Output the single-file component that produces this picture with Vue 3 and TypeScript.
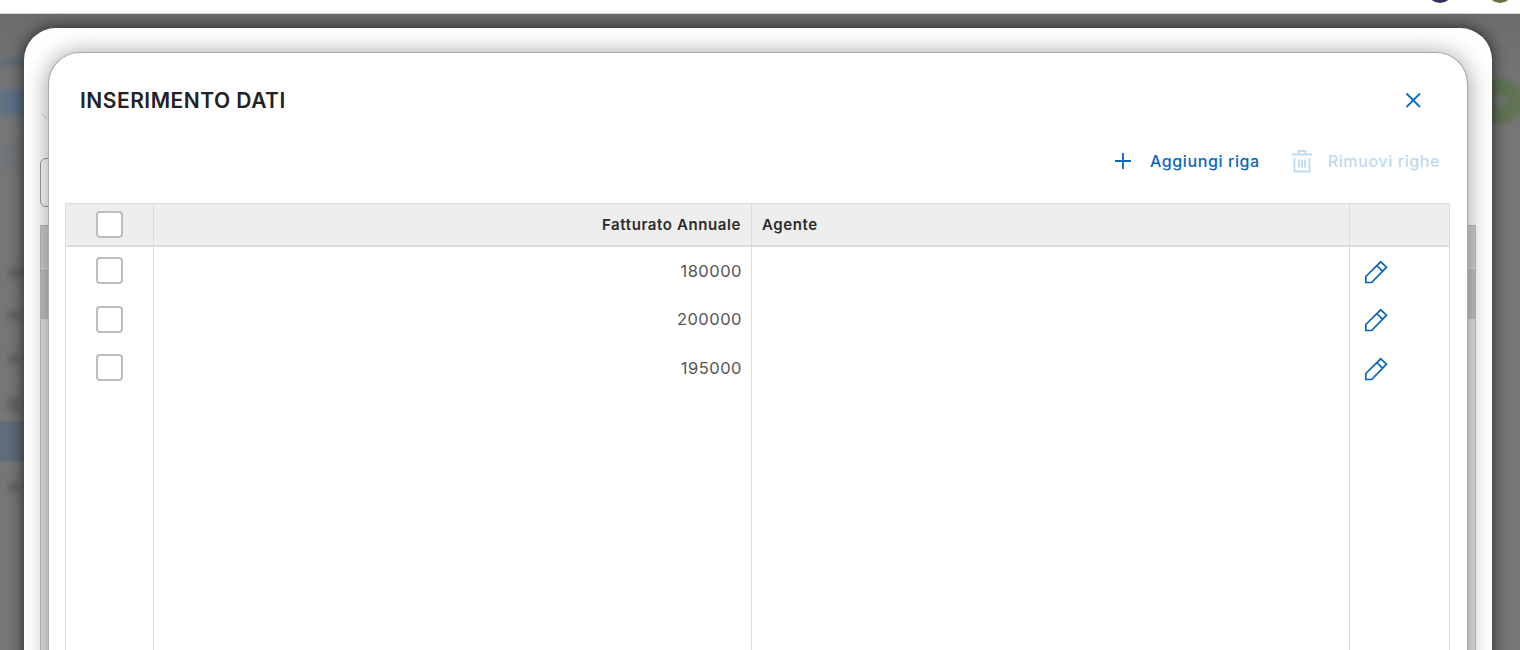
<script setup lang="ts">
interface Row {
  id: number
  fatturato: string
  agente: string
}

const rows: Row[] = [
  { id: 1, fatturato: '180000', agente: '' },
  { id: 2, fatturato: '200000', agente: '' },
  { id: 3, fatturato: '195000', agente: '' },
]
</script>

<template>
  <div class="page">
    <div class="topbar">
      <span class="avatar purple"></span>
      <span class="avatar olive"></span>
    </div>
    <div class="backdrop">
      <span class="blob stripe"></span>
      <span class="blob blue-box"></span>
      <span class="blob search"></span>
      <span class="blob row-a"></span>
      <span class="blob row-b"></span>
      <span class="blob row-c"></span>
      <span class="blob row-d"></span>
      <span class="blob selected"></span>
      <span class="blob row-e"></span>
      <span class="ring"></span>

      <div class="outer">
        <div class="behind">
          <svg class="chevron" width="10" height="10" viewBox="0 0 10 10">
            <path d="M0 2l5 5" fill="none" stroke="#b4cbe6" stroke-width="1" />
          </svg>
          <span class="filter-box"></span>
          <div class="behind-table">
            <span class="behind-head"></span>
            <span class="behind-strip"></span>
          </div>
        </div>

        <div class="dialog">
          <header class="head">
            <h1>INSERIMENTO DATI</h1>
            <button class="close" type="button" aria-label="Chiudi">
              <svg width="18" height="18" viewBox="0 0 18 18">
                <path d="M2.500 2.500l13.500 13.500M16 2.500L2.500 16" fill="none" stroke="currentColor" stroke-width="1.800" />
              </svg>
            </button>
          </header>

          <div class="toolbar">
            <button class="action" type="button">
              <svg width="18" height="18" viewBox="0 0 18 18">
                <path d="M9 1v16M1 9h16" fill="none" stroke="currentColor" stroke-width="1.800" />
              </svg>
              <span>Aggiungi riga</span>
            </button>
            <button class="action disabled" type="button">
              <svg width="22" height="24" viewBox="0 0 22 24" fill="none" stroke="currentColor" stroke-width="1.800">
                <path d="M1 5.500h20M7.500 5.500V2h7v3.500M3.500 9v13.500h15V9M8 10.500v8M11 10.500v8M14 10.500v8" />
              </svg>
              <span>Rimuovi righe</span>
            </button>
          </div>

          <div class="table">
            <div class="cell th check"><span class="box head-box"></span></div>
            <div class="cell th num">Fatturato Annuale</div>
            <div class="cell th">Agente</div>
            <div class="cell th"></div>

            <div class="col col-check">
              <div v-for="row in rows" :key="row.id" class="line"><span class="box"></span></div>
            </div>
            <div class="col">
              <div v-for="row in rows" :key="row.id" class="line num value">{{ row.fatturato }}</div>
            </div>
            <div class="col">
              <div v-for="row in rows" :key="row.id" class="line value">{{ row.agente }}</div>
            </div>
            <div class="col">
              <div v-for="row in rows" :key="row.id" class="line edit">
                <svg width="24" height="24" viewBox="0 0 24 24" fill="none" stroke="currentColor" stroke-width="1.700">
                  <path d="M1.800 22.500V16.500L16.700 1.800L22.500 7.200L7.700 22.500ZM12.700 5.500L18.700 11.300" />
                </svg>
              </div>
            </div>
          </div>
        </div>
      </div>
    </div>
  </div>
</template>

<style scoped>
.page {
  width: 1520px;
  height: 650px;
  display: flex;
  flex-direction: column;
  overflow: hidden;
  background: #fff;
  font-family: Inter, "Liberation Sans", sans-serif;
  color: #2b2b2b;
}
.topbar {
  height: 13px;
  flex: none;
  position: relative;
  border-bottom: 1px solid #d4d4d4;
  overflow: hidden;
}
.avatar {
  position: absolute;
  top: -23px;
  width: 26px;
  height: 26px;
  border-radius: 50%;
}
.purple {
  left: 1427px;
  background: #3d2a5c;
}
.olive {
  left: 1487px;
  background: #6f7042;
}
.backdrop {
  flex: 1;
  min-height: 0;
  position: relative;
  background: linear-gradient(#6c6c6c, #767676 80px);
  padding: 14px 28px 0 24px;
}
.blob {
  position: absolute;
  filter: blur(3px);
}
.stripe {
  left: 0;
  top: 45px;
  width: 24px;
  height: 5px;
  background: #55677d;
}
.blue-box {
  left: 0;
  top: 75px;
  width: 24px;
  height: 26px;
  background: #5c7088;
  border-radius: 3px;
}
.search {
  left: 3px;
  top: 133px;
  width: 14px;
  height: 14px;
  border: 3px solid #66727e;
  border-radius: 50%;
}
.row-a,
.row-b,
.row-c,
.row-d,
.row-e {
  left: 8px;
  width: 12px;
  height: 8px;
  background: #606060;
}
.row-a {
  top: 255px;
  width: 18px;
}
.row-b {
  top: 297px;
}
.row-c {
  top: 341px;
}
.row-d {
  top: 384px;
  height: 14px;
}
.row-e {
  top: 469px;
}
.selected {
  left: -4px;
  top: 407px;
  width: 28px;
  height: 40px;
  background: #5f6c79;
  filter: blur(1px);
}
.ring {
  position: absolute;
  left: 1477px;
  top: 64px;
  width: 12px;
  height: 12px;
  border: 17px solid #617355;
  border-radius: 50%;
  filter: blur(2px);
}
.outer {
  position: relative;
  height: 640px;
  padding: 24px 24px 0;
  background: #fff;
  border-radius: 32px 32px 0 0;
  box-shadow: 0 0 16px rgba(0, 0, 0, 0.7);
}
.behind {
  position: absolute;
  inset: 0;
}
.chevron {
  position: absolute;
  left: 18px;
  top: 84px;
}
.filter-box {
  position: absolute;
  left: 16px;
  top: 130px;
  width: 40px;
  height: 47px;
  border: 1px solid #9a9a9a;
  border-radius: 6px;
}
.behind-table {
  position: absolute;
  left: 16px;
  right: 16px;
  top: 197px;
  bottom: 0;
  background: #e6e6e6;
  border: 1px solid #bdbdbd;
}
.behind-head,
.behind-strip {
  position: absolute;
  left: 0;
  right: 0;
}
.behind-head {
  top: 0;
  height: 42px;
  background: #cfcfcf;
}
.behind-strip {
  top: 43px;
  height: 50px;
  background: #c4c4c4;
}
.dialog {
  position: relative;
  height: 620px;
  display: flex;
  flex-direction: column;
  background: #fff;
  border: 1px solid #a8a8a8;
  border-bottom: 0;
  border-radius: 32px 32px 0 0;
  box-shadow: 0 2px 24px rgba(0, 0, 0, 0.4);
}
.head {
  display: flex;
  align-items: center;
  justify-content: space-between;
  height: 30px;
  margin-top: 32px;
  padding: 0 45px 0 31px;
}
.close {
  display: flex;
  padding: 0;
  border: 0;
  background: none;
  color: #0a6cc4;
}
h1 {
  margin: 0;
  font-size: 21px;
  font-weight: 600;
  letter-spacing: 0.5px;
  color: #222;
}
.toolbar {
  display: flex;
  justify-content: flex-end;
  gap: 31px;
  height: 32px;
  margin-top: 30px;
  padding-right: 27px;
}
.action {
  display: flex;
  align-items: center;
  gap: 18px;
  padding: 0;
  border: 0;
  background: none;
  font: inherit;
  font-size: 16px;
  font-weight: 500;
  letter-spacing: 0.6px;
  color: #0a66bd;
}
.action.disabled {
  gap: 15px;
  color: #bfdaf2;
}
.table {
  display: grid;
  grid-template-columns: 88px 598px 598px 99px;
  grid-template-rows: 44px 1fr;
  flex: 1;
  min-height: 0;
  margin: 26px 17px 0 16px;
  border-right: 1px solid #dcdcdc;
  border-left: 1px solid #dcdcdc;
}
.cell {
  display: flex;
  align-items: center;
  padding: 0 10px;
  background: #eee;
  border-top: 1px solid #dcdcdc;
  border-bottom: 2px solid #dcdcdc;
  border-right: 1px solid #dcdcdc;
  font-size: 15px;
  font-weight: 600;
  letter-spacing: 0.6px;
  color: #2b2b2b;
}
.cell:nth-child(4),
.col:last-child {
  border-right: 0;
}
.cell.num {
  justify-content: flex-end;
}
.check {
  justify-content: center;
  padding: 0;
}
.col {
  display: flex;
  flex-direction: column;
  border-right: 1px solid #dcdcdc;
}
.col-check {
  align-items: center;
}
.line {
  display: flex;
  align-items: center;
  box-sizing: border-box;
  height: 48.500px;
  padding-bottom: 1px;
  flex: none;
}
.num {
  justify-content: flex-end;
}
.value {
  padding-left: 9px;
  padding-right: 9px;
  font-size: 16.500px;
  letter-spacing: 0.5px;
  color: #555;
}
.edit {
  padding-left: 14px;
  padding-top: 2px;
  color: #0a66bd;
}
.box {
  display: block;
  width: 27px;
  height: 27px;
  box-sizing: border-box;
  background: #fff;
  border: 2px solid #bdbdbd;
  border-radius: 4px;
}
.head-box {
  margin-top: -1px;
}
</style>

<style>
html,
body {
  margin: 0;
  overflow: hidden;
}
</style>
